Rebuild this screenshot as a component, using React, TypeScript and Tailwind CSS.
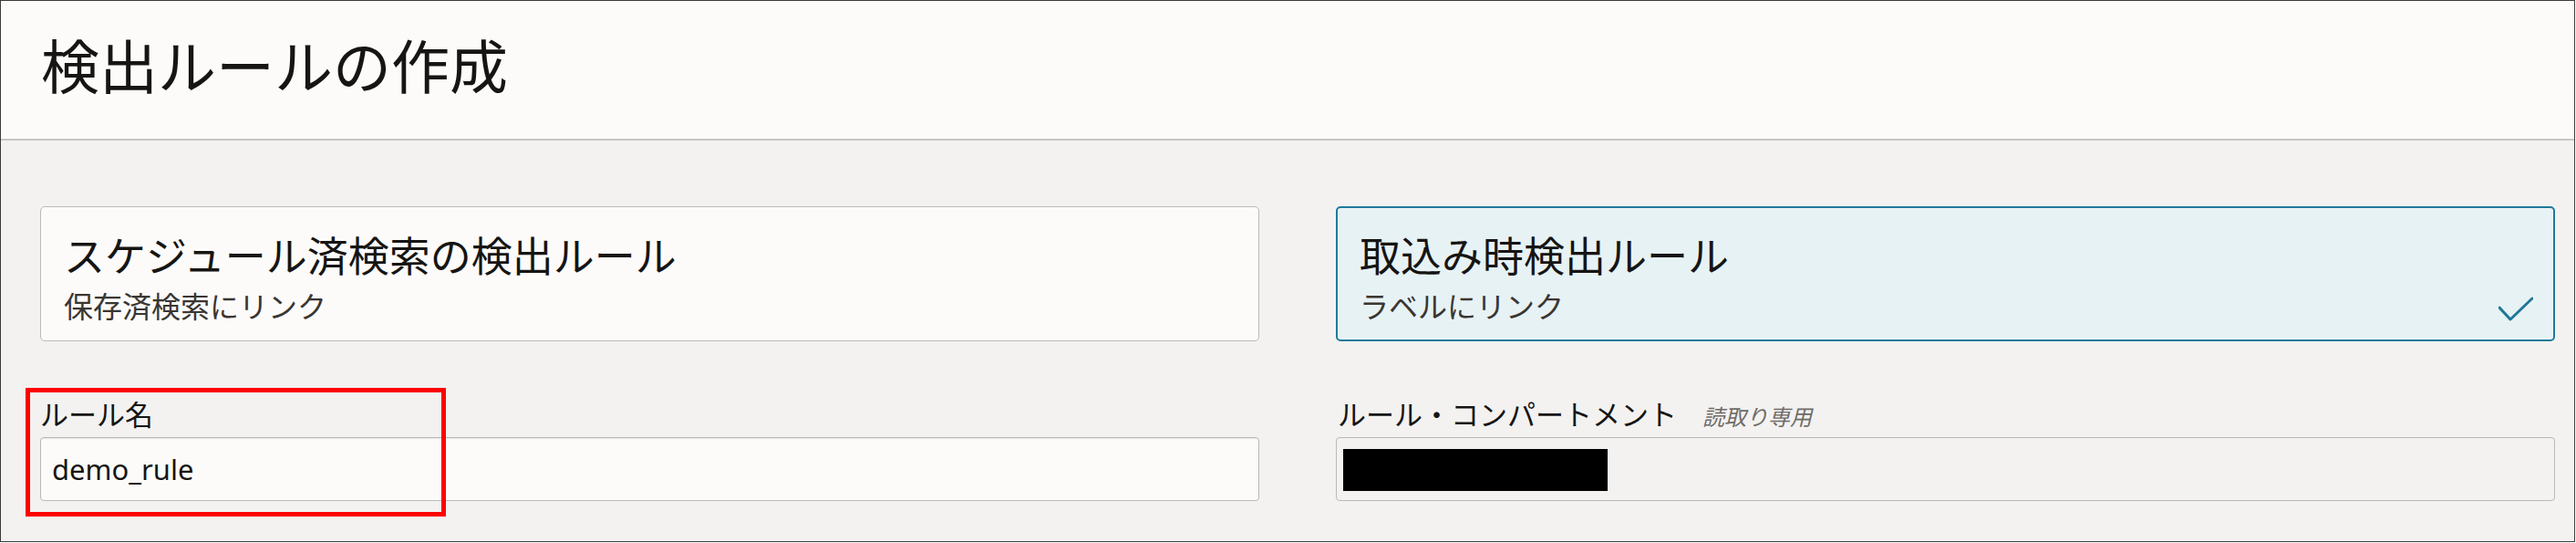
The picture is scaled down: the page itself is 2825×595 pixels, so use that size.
const font = 'font-["Noto_Sans","Noto_Sans_CJK_JP",sans-serif]';

const CheckMark = () => (
  <svg width="38" height="27" viewBox="0 0 38 27" fill="none">
    <polyline
      points="1,12 13,25 37,2"
      stroke="#1f7797"
      strokeWidth="3"
      strokeLinecap="round"
      strokeLinejoin="round"
    />
  </svg>
);

const RuleCard = ({
  title,
  subtitle,
  selected,
}: {
  title: string;
  subtitle: string;
  selected?: boolean;
}) => (
  <div
    className={
      selected
        ? 'h-[148px] rounded-[5px] border-2 border-[#1e7b9a] bg-[#e7f2f5] pl-[24px] pr-[22px] pt-[30px]'
        : 'h-[148px] rounded-[5px] border border-[#bdb9b4] bg-[#fcfbfa] pl-[25px] pr-[22px] pt-[31px]'
    }
  >
    <div className="text-[45px] leading-none text-[#161513]">{title}</div>
    <div className="mt-[17px] flex items-start justify-between">
      <div className="text-[32px] leading-none text-[#3a3632]">{subtitle}</div>
      {selected && (
        <div className="mt-[5px]">
          <CheckMark />
        </div>
      )}
    </div>
  </div>
);

const App = () => {
  return (
    <div className={`relative h-[594px] w-[2824px] border border-[#3a3a3a] bg-[#f3f2f1] ${font}`}>
      <div className="h-[153px] border-b-2 border-[#c9c5c0] bg-[#fcfbfa] pl-[44px] pt-[40px]">
        <h1 className="text-[64px] font-normal leading-none text-[#161513]">検出ルールの作成</h1>
      </div>

      <div className="grid grid-cols-2 gap-x-[84px] pl-[43px] pr-[21px] pt-[72px]">
        <RuleCard title="スケジュール済検索の検出ルール" subtitle="保存済検索にリンク" />
        <RuleCard title="取込み時検出ルール" subtitle="ラベルにリンク" selected />

        <div className="mt-[65px]">
          <div className="h-[40px] text-[31px] leading-none text-[#161513]">ルール名</div>
          <div className="flex h-[70px] items-center rounded-[4px] border border-[#bcb8b3] bg-[#fcfbfa] pl-[12px] shadow-[inset_0_1px_1px_rgba(0,0,0,0.08)]">
            <span className="text-[31px] leading-none text-[#161513]">demo_rule</span>
          </div>
        </div>

        <div className="mt-[65px]">
          <div className="flex h-[40px] items-baseline">
            <span className="pl-[2px] text-[31px] leading-none text-[#161513]">ルール・コンパートメント</span>
            <span className="ml-[28px] text-[24px] italic leading-none text-[#6f6b67]">読取り専用</span>
          </div>
          <div className="h-[70px] rounded-[4px] border border-[#bcb8b3] bg-[#f3f2f1] pl-[7px] pt-[12px]">
            <div className="h-[46px] w-[290px] bg-black" />
          </div>
        </div>
      </div>

      <div className="absolute left-[27px] top-[424px] h-[141px] w-[461px] border-[5px] border-[#ff0000]" />
    </div>
  );
};

export default App;
